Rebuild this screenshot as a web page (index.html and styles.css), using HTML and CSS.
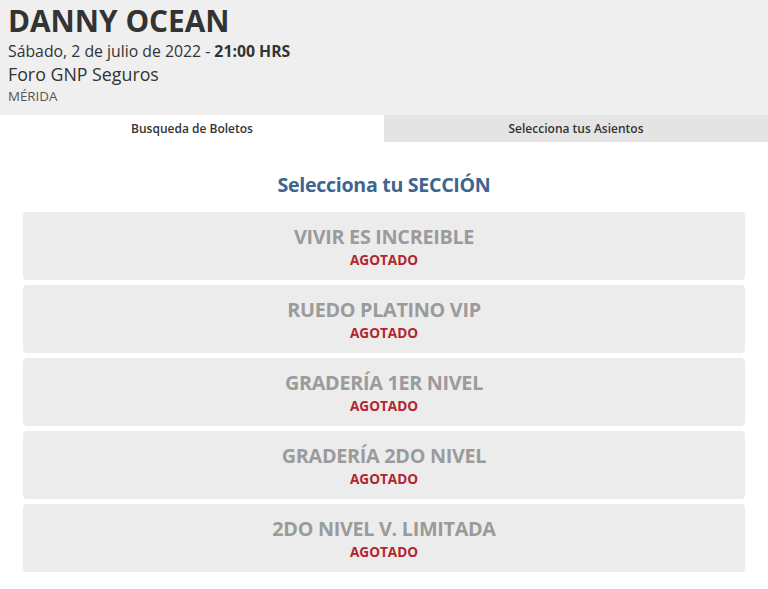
FILE: index.html
```html
<!DOCTYPE html>
<html lang="es">
<head>
<meta charset="utf-8">
<title>Danny Ocean</title>
<link rel="stylesheet" href="styles.css">
</head>
<body>
<header class="event">
  <h1 class="event-title">DANNY OCEAN</h1>
  <div class="event-date">Sábado, 2 de julio de 2022 - <b>21:00 HRS</b></div>
  <div class="event-venue">Foro GNP Seguros</div>
  <div class="event-city">MÉRIDA</div>
</header>
<nav class="tabs">
  <div class="tab active">Busqueda de Boletos</div>
  <div class="tab">Selecciona tus Asientos</div>
</nav>
<main class="content">
  <h2 class="heading">Selecciona tu SECCIÓN</h2>
  <div class="sections">
    <div class="section"><div class="section-name">VIVIR ES INCREIBLE</div><div class="section-status">AGOTADO</div></div>
    <div class="section"><div class="section-name">RUEDO PLATINO VIP</div><div class="section-status">AGOTADO</div></div>
    <div class="section"><div class="section-name">GRADERÍA 1ER NIVEL</div><div class="section-status">AGOTADO</div></div>
    <div class="section"><div class="section-name">GRADERÍA 2DO NIVEL</div><div class="section-status">AGOTADO</div></div>
    <div class="section"><div class="section-name">2DO NIVEL V. LIMITADA</div><div class="section-status">AGOTADO</div></div>
  </div>
</main>
</body>
</html>
```
FILE: styles.css
```css
* { box-sizing: border-box; }
html, body { margin: 0; padding: 0; background: #fff; }
body { font-family: "Open Sans", "Liberation Sans", sans-serif; color: #333; }

.event {
  background: #efefef;
  height: 115px;
  padding: 3px 8px 0;
}
.event-title {
  margin: 0;
  font-size: 29.8px;
  font-weight: 700;
  line-height: 36px;
  color: #333;
}
.event-date {
  font-size: 15.8px;
  line-height: 24px;
  color: #333;
}
.event-date b { font-weight: 700; }
.event-venue {
  margin-top: -1px;
  font-size: 17.8px;
  line-height: 24px;
  color: #333;
}
.event-city {
  font-size: 13.3px;
  line-height: 20px;
  color: #555;
}

.tabs {
  display: grid;
  grid-template-columns: 384px 1fr;
  height: 27px;
}
.tab {
  display: flex;
  align-items: center;
  justify-content: center;
  font-size: 12px;
  font-weight: 600;
  color: #333;
  background: #e4e4e4;
}
.tab.active { background: #fff; }

.content { padding: 0 23px; }
.heading {
  margin: 0;
  padding-top: 30px;
  height: 70px;
  text-align: center;
  font-size: 19.6px;
  font-weight: 700;
  color: #3d6590;
  letter-spacing: -0.3px;
  line-height: 26px;
}
.sections {
  display: flex;
  flex-direction: column;
  gap: 5px;
}
.section {
  background: #ececec;
  border-radius: 4px;
  height: 68px;
  display: flex;
  flex-direction: column;
  align-items: center;
  padding-top: 13px;
}
.section-name {
  font-size: 19.8px;
  font-weight: 700;
  color: #9b9b9b;
  line-height: 24px;
  letter-spacing: -0.3px;
}
.section-status {
  margin-top: 2px;
  font-size: 13.6px;
  font-weight: 700;
  color: #b1262e;
  line-height: 18px;
}
```
